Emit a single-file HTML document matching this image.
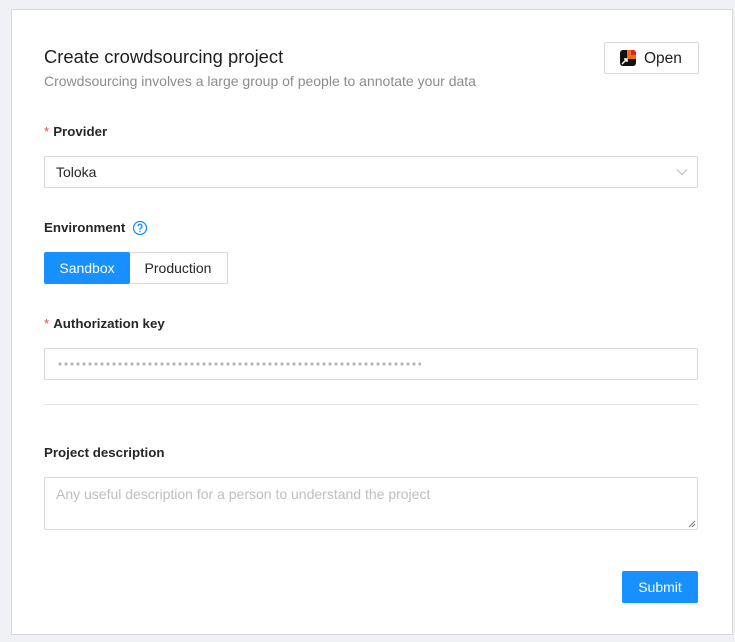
<!DOCTYPE html>
<html><head><style>
*{box-sizing:border-box;margin:0;padding:0}
body{width:735px;height:642px;background:#f0f1f4;font-family:"Liberation Sans",sans-serif;position:relative;overflow:hidden}
.card{position:absolute;left:11px;top:9px;width:722px;height:626px;background:#fff;border:1px solid #d9d9d9}
.a{position:absolute}
.lbl{font-size:13px;font-weight:bold;color:#262626}
.star{color:#e5484d;font-weight:normal;margin-right:4px}
.inp{border:1px solid #d9d9d9;border-radius:2px;background:#fff}
</style></head><body>
<div class="card"></div>
<div class="a" style="left:44px;top:46px;font-size:18.4px;color:#1f1f1f">Create crowdsourcing project</div>
<div class="a" style="left:44px;top:73px;font-size:14px;color:#8c8c8c">Crowdsourcing involves a large group of people to annotate your data</div>
<div class="a inp" style="left:604px;top:42px;width:95px;height:32px">
 <div class="a" style="left:15px;top:7px;width:16px;height:16px;background:#111;border-radius:3px;overflow:hidden">
  <div class="a" style="left:7px;top:0;width:9px;height:9px;background:#f26a1b"></div>
  <div class="a" style="left:11px;top:0;width:5px;height:5px;background:#e8202a"></div>
  <svg class="a" style="left:1px;top:7px" width="8" height="8" viewBox="0 0 8 8"><path d="M1 7L6 2M3 2H6V5" stroke="#fff" stroke-width="1.5" fill="none"/></svg>
 </div>
 <div class="a" style="left:39px;top:7px;font-size:15.5px;color:#1f1f1f">Open</div>
</div>
<div class="a lbl" style="left:44px;top:124px;font-size:13.3px"><span class="star">*</span>Provider</div>
<div class="a inp" style="left:44px;top:156px;width:654px;height:32px">
 <div class="a" style="left:11px;top:7px;font-size:14px;color:#262626">Toloka</div>
 <svg class="a" style="left:631px;top:11px" width="12" height="8" viewBox="0 0 12 8"><path d="M1 1.5L6 6.5L11 1.5" stroke="#bfbfbf" stroke-width="1.2" fill="none"/></svg>
</div>
<div class="a lbl" style="left:44px;top:220px;font-size:13.3px">Environment</div>
<svg class="a" style="left:132px;top:220px" width="16" height="16" viewBox="0 0 16 16"><circle cx="8" cy="8" r="6.5" stroke="#1890ff" stroke-width="1.3" fill="none"/><path d="M6 6.3a2 2 0 1 1 2.6 1.9c-.5.2-.6.5-.6 1v.5" stroke="#1890ff" stroke-width="1.3" fill="none"/><circle cx="8" cy="11.4" r=".8" fill="#1890ff"/></svg>
<div class="a" style="left:44px;top:252px;width:86px;height:32px;background:#1890ff;border-radius:2px 0 0 2px;color:#fff;font-size:14px;text-align:center;line-height:32px">Sandbox</div>
<div class="a" style="left:129px;top:252px;width:99px;height:32px;border:1px solid #d9d9d9;border-left:none;border-radius:0 2px 2px 0;color:#262626;font-size:14px;text-align:center;line-height:30px">Production</div>
<div class="a lbl" style="left:44px;top:316px;font-size:13.3px"><span class="star">*</span>Authorization key</div>
<div class="a inp" style="left:44px;top:348px;width:654px;height:32px">
 <div class="a" style="left:12px;top:13px;width:364px;height:4px;background:radial-gradient(circle,#b0b5be 1.5px,transparent 1.8px) 0 0/6px 4px repeat-x"></div>
</div>
<div class="a" style="left:44px;top:404px;width:654px;height:1px;background:#e5e5e5"></div>
<div class="a lbl" style="left:44px;top:445px;font-size:13.3px">Project description</div>
<div class="a inp" style="left:44px;top:477px;width:654px;height:53px">
 <div class="a" style="left:11px;top:8px;font-size:14px;color:#bfbfbf">Any useful description for a person to understand the project</div>
 <svg class="a" style="left:643px;top:42px" width="8" height="8" viewBox="0 0 8 8"><path d="M1 7L7 1M4 7L7 4" stroke="#777" stroke-width="1"/></svg>
</div>
<div class="a" style="left:622px;top:571px;width:76px;height:32px;background:#1890ff;border-radius:2px;color:#fff;font-size:14px;text-align:center;line-height:32px;box-shadow:0 2px 0 rgba(0,0,0,.04)">Submit</div>
</body></html>
